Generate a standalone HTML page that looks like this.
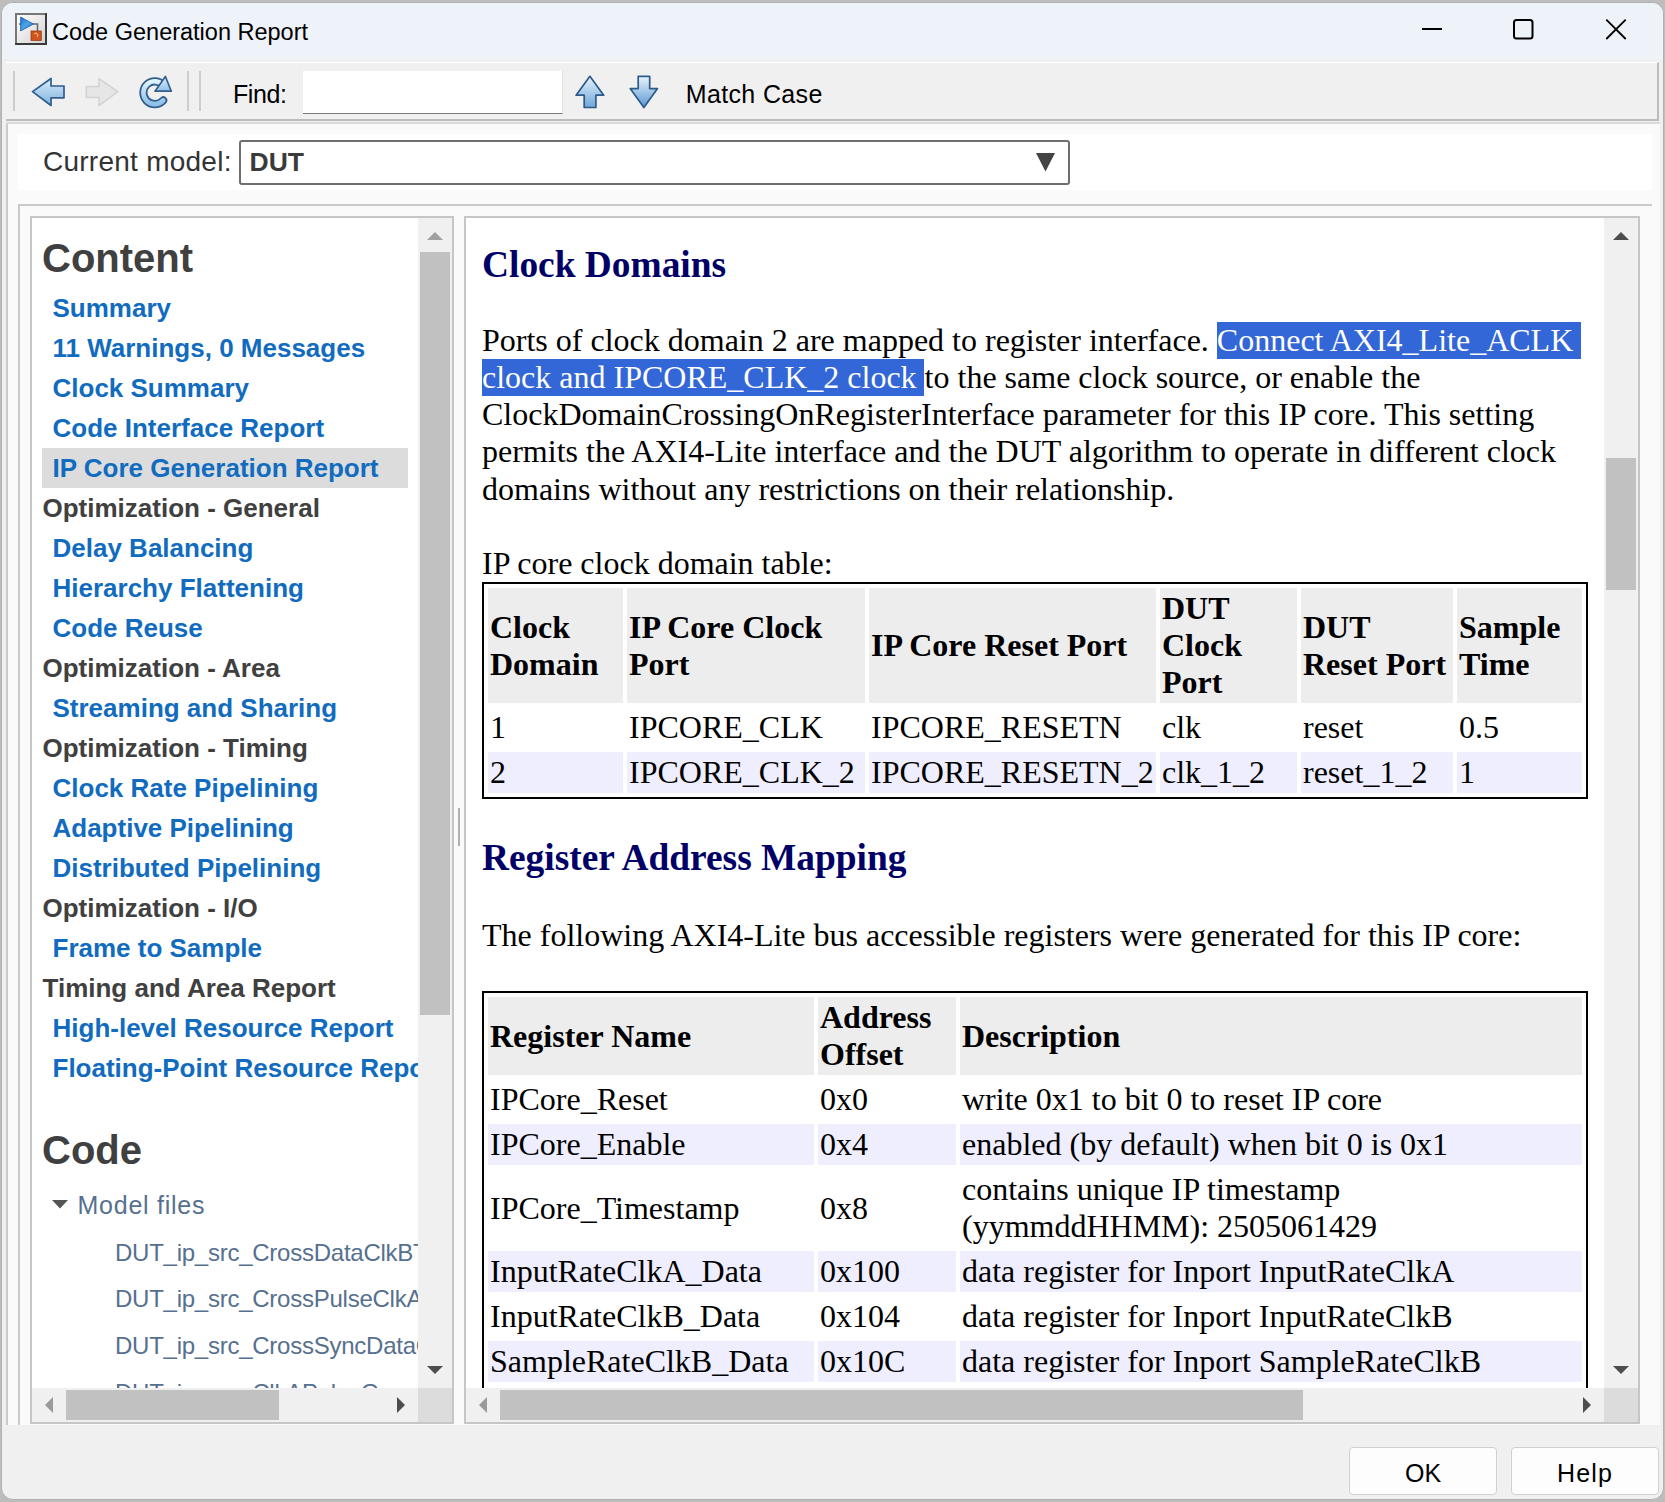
<!DOCTYPE html>
<html><head><meta charset="utf-8">
<style>
*{margin:0;padding:0;box-sizing:border-box}
html,body{width:1665px;height:1502px;overflow:hidden;background:#bdbdbd;font-family:"Liberation Sans",sans-serif;position:relative}
.a{position:absolute}
.t{position:absolute;white-space:nowrap}
.nav{position:absolute;white-space:nowrap;font-size:26px;font-weight:700;line-height:40px;height:40px}
.lk{color:#116cc0;padding-left:10px}
.hd{color:#404040}
.h2{position:absolute;font-family:"Liberation Serif",serif;font-weight:700;color:#000066;font-size:37.4px;white-space:nowrap;line-height:37.4px}
.p{position:absolute;font-family:"Liberation Serif",serif;font-size:32px;line-height:37px;white-space:nowrap;color:#000}
.sel{background:#3366d6;color:#fff}
.c{position:absolute;font-family:"Liberation Serif",serif;font-size:32px;line-height:37px;white-space:nowrap;color:#000;background:#fff}
.hc{background:#eeeeee;font-weight:700}
.alt{background:#eeeeff}
.cell{position:absolute;display:flex;align-items:center;padding:0 2px;font-family:"Liberation Serif",serif;font-size:32px;line-height:37px;white-space:nowrap;color:#000;background:#fff}
.cell.hc{background:#ededed;font-weight:700}
.cell.alt{background:#eeeeff}
</style></head><body>
<!-- window frame -->
<div class="a" style="left:1px;top:2px;width:1663px;height:1498px;background:#f0f0f0;border:1px solid #b0b0b0;border-radius:12px;overflow:hidden">
  <div class="a" style="left:0;top:0;width:1662px;height:56px;background:#eef2f9"></div>
</div>

<!-- title -->
<div class="t" style="left:52px;top:21px;font-size:23.5px;line-height:23.5px;color:#000">Code Generation Report</div>


<!-- toolbar -->
<div class="a" style="left:6px;top:62px;width:1653px;height:59px;background:#f0f0f0;border-top:1px solid #fff;border-bottom:2px solid #bcbcbc;border-right:2px solid #bcbcbc"></div>
<div class="a" style="left:6px;top:122px;width:1654px;height:2px;background:#dadada"></div>
<div class="a" style="left:13px;top:71px;width:2px;height:40px;background:#cdcdcd"></div>
<div class="a" style="left:187px;top:71px;width:2px;height:40px;background:#cdcdcd"></div>
<div class="a" style="left:199px;top:71px;width:2px;height:40px;background:#cdcdcd"></div>
<div class="t" style="left:233px;top:81.8px;font-size:25px;line-height:25px;letter-spacing:-0.4px;color:#000">Find:</div>
<div class="a" style="left:303px;top:71px;width:260px;height:43px;background:#fff;border-bottom:1px solid #7a7a7a;border-right:1px solid #e0e0e0"></div>
<div class="t" style="left:685.8px;top:81.5px;font-size:25px;line-height:25px;letter-spacing:0.35px;color:#000">Match Case</div>


<!-- icons -->
<svg class="a" style="left:14px;top:12px" width="34" height="34">
 <defs><linearGradient id="ibg" x1="0" y1="0" x2="1" y2="1"><stop offset="0" stop-color="#ffffff"/><stop offset="1" stop-color="#d2d2d2"/></linearGradient>
 <linearGradient id="tri" x1="0" y1="0" x2="1" y2="1"><stop offset="0" stop-color="#1f6fc8"/><stop offset="0.5" stop-color="#4aa6e8"/><stop offset="1" stop-color="#1a58a8"/></linearGradient></defs>
 <rect x="2" y="2" width="30" height="30" fill="url(#ibg)" stroke="#767676" stroke-width="2"/>
 <path d="M32,1.2 L32,32 L1.2,32" fill="none" stroke="#3a3a3a" stroke-width="2"/>
 <path d="M5,12 L8,12 M19,12 L23.5,12 L23.5,19" stroke="#6a6a6a" stroke-width="1.6" fill="none"/>
 <polygon points="6.6,5 19.5,12 6.6,19" fill="url(#tri)" stroke="#1e5ea8" stroke-width="0.8"/>
 <rect x="17" y="19" width="10.3" height="9.4" fill="#cf541f" stroke="#9a3a18" stroke-width="0.8"/>
 <path d="M20,22 l2,-1 l2,2 l-1,2" stroke="#f0b060" stroke-width="1.2" fill="none"/>
</svg>
<svg class="a" style="left:30px;top:76px" width="38" height="32">
 <defs><linearGradient id="ab" x1="0" y1="0" x2="0" y2="1"><stop offset="0" stop-color="#d8ecfa"/><stop offset="1" stop-color="#7fb2de"/></linearGradient></defs>
 <path d="M2.5,15.6 L21,2.5 L21,10 L34,10 L34,21.8 L21,21.8 L21,29.5 Z" fill="url(#ab)" stroke="#2f5d8c" stroke-width="1.7" stroke-linejoin="round"/>
</svg>
<svg class="a" style="left:84px;top:76px" width="38" height="32">
 <path d="M33.8,15.6 L15,2.6 L15,10.5 L2.3,10.5 L2.3,21.5 L15,21.5 L15,29.6 Z" fill="#e6e6e6" stroke="#d2d2d2" stroke-width="1.5" stroke-linejoin="round"/>
</svg>
<svg class="a" style="left:134px;top:72px" width="44" height="40">
 <defs><linearGradient id="rb" x1="0" y1="0" x2="0" y2="1"><stop offset="0" stop-color="#e0f2fc"/><stop offset="1" stop-color="#8fc0e6"/></linearGradient></defs>
 <path d="M29.2,28.4 A11.4,11.4 0 1 1 29.6,13.5" fill="none" stroke="#335f8e" stroke-width="8.2" stroke-linecap="round"/>
 <path d="M29.2,28.4 A11.4,11.4 0 1 1 29.6,13.5" fill="none" stroke="url(#rb)" stroke-width="4.6" stroke-linecap="round"/>
 <polygon points="31.4,4.5 37.3,19.2 21,19.2" fill="url(#rb)" stroke="#335f8e" stroke-width="1.7" stroke-linejoin="round"/>
</svg>
<svg class="a" style="left:574px;top:74px" width="32" height="36">
 <defs><linearGradient id="ub" x1="0" y1="0" x2="0" y2="1"><stop offset="0" stop-color="#e8f4fc"/><stop offset="1" stop-color="#6ea6d8"/></linearGradient></defs>
 <path d="M15.9,2.3 L29.7,21.2 L21.9,21.2 L21.9,33.5 L10.2,33.5 L10.2,21.2 L2.1,21.2 Z" fill="url(#ub)" stroke="#2c5a8a" stroke-width="1.7" stroke-linejoin="round"/>
</svg>
<svg class="a" style="left:628px;top:74px" width="32" height="36">
 <defs><linearGradient id="db" x1="0" y1="0" x2="0" y2="1"><stop offset="0" stop-color="#e8f4fc"/><stop offset="1" stop-color="#5b97d2"/></linearGradient></defs>
 <path d="M10.2,2.3 L21.7,2.3 L21.7,14.6 L29.5,14.6 L15.9,33.5 L2.2,14.6 L10.2,14.6 Z" fill="url(#db)" stroke="#2c5a8a" stroke-width="1.7" stroke-linejoin="round"/>
</svg>
<!-- window controls -->
<svg class="a" style="left:1410px;top:8px" width="240" height="42">
 <path d="M12,21 L32,21" stroke="#000" stroke-width="2"/>
 <rect x="104" y="12" width="18.5" height="18.5" rx="2.5" fill="none" stroke="#000" stroke-width="2"/>
 <path d="M196.3,11.6 L215.7,31 M215.7,11.6 L196.3,31" stroke="#000" stroke-width="1.8"/>
</svg>

<!-- current model band -->
<div class="a" style="left:6px;top:124px;width:2px;height:1301px;background:#cacaca"></div>
<div class="a" style="left:8px;top:124px;width:1652px;height:1301px;background:#fafafa"></div>
<div class="a" style="left:18px;top:134px;width:1634px;height:56px;background:#fff"></div>
<div class="t" style="left:43px;top:148px;font-size:28px;line-height:28px;letter-spacing:0.25px;color:#333">Current model:</div>
<div class="a" style="left:239px;top:140px;width:831px;height:45px;background:#fff;border:2px solid #6e6e6e;border-radius:3px"></div>
<div class="t" style="left:249.5px;top:149px;font-size:26.5px;line-height:26.5px;font-weight:700;color:#3a3a3a">DUT</div>
<svg class="a" style="left:1036px;top:153px" width="20" height="19"><polygon points="0,0 19,0 9.5,18.5" fill="#444"/></svg>
<div class="a" style="left:18px;top:204px;width:1634px;height:2px;background:#cacaca"></div>
<div class="a" style="left:18px;top:204px;width:2px;height:1221px;background:#cacaca"></div>

<!-- left panel -->
<div id="lp" class="a" style="left:30px;top:216px;width:424px;height:1208px;background:#fff;border:2px solid #c6c6c6;overflow:hidden"></div>
<!-- content panel -->
<div id="cp" class="a" style="left:464px;top:216px;width:1176px;height:1208px;background:#fff;border:2px solid #c6c6c6;overflow:hidden"></div>

<!-- bottom buttons -->
<div class="a" style="left:1349px;top:1447px;width:148px;height:48px;background:#fdfdfd;border:1px solid #d0d0d0;border-radius:4px"></div>
<div class="t" style="left:1405px;top:1461px;font-size:25px;line-height:25px;color:#000">OK</div>
<div class="a" style="left:1511px;top:1447px;width:148px;height:48px;background:#fdfdfd;border:1px solid #d0d0d0;border-radius:4px"></div>
<div class="t" style="left:1557px;top:1461px;font-size:25px;line-height:25px;letter-spacing:1.2px;color:#000">Help</div>


<!-- left nav -->
<div class="a" style="left:32px;top:218px;width:386px;height:1170px;overflow:hidden">
<div class="t" style="left:10px;top:20.1px;font-size:40px;line-height:40px;font-weight:700;color:#404040">Content</div>
<div class="a" style="left:10px;top:230px;width:366px;height:40px;background:#dcdcdc"></div>
<div class="nav lk" style="left:10.5px;top:69.5px">Summary</div>
<div class="nav lk" style="left:10.5px;top:109.5px">11 Warnings, 0 Messages</div>
<div class="nav lk" style="left:10.5px;top:149.5px">Clock Summary</div>
<div class="nav lk" style="left:10.5px;top:189.5px">Code Interface Report</div>
<div class="nav lk" style="left:10.5px;top:229.5px">IP Core Generation Report</div>
<div class="nav hd" style="left:10.5px;top:269.5px">Optimization - General</div>
<div class="nav lk" style="left:10.5px;top:309.5px">Delay Balancing</div>
<div class="nav lk" style="left:10.5px;top:349.5px">Hierarchy Flattening</div>
<div class="nav lk" style="left:10.5px;top:389.5px">Code Reuse</div>
<div class="nav hd" style="left:10.5px;top:429.5px">Optimization - Area</div>
<div class="nav lk" style="left:10.5px;top:469.5px">Streaming and Sharing</div>
<div class="nav hd" style="left:10.5px;top:509.5px">Optimization - Timing</div>
<div class="nav lk" style="left:10.5px;top:549.5px">Clock Rate Pipelining</div>
<div class="nav lk" style="left:10.5px;top:589.5px">Adaptive Pipelining</div>
<div class="nav lk" style="left:10.5px;top:629.5px">Distributed Pipelining</div>
<div class="nav hd" style="left:10.5px;top:669.5px">Optimization - I/O</div>
<div class="nav lk" style="left:10.5px;top:709.5px">Frame to Sample</div>
<div class="nav hd" style="left:10.5px;top:749.5px">Timing and Area Report</div>
<div class="nav lk" style="left:10.5px;top:789.5px">High-level Resource Report</div>
<div class="nav lk" style="left:10.5px;top:829.5px">Floating-Point Resource Report</div>
<div class="t" style="left:10px;top:911.9px;font-size:40px;line-height:40px;font-weight:700;color:#404040">Code</div>
<svg class="a" style="left:20px;top:982px" width="17" height="9"><polygon points="0,0 16,0 8,8.5" fill="#555"/></svg>
<div class="t" style="left:45.5px;top:975.3px;font-size:25px;line-height:25px;letter-spacing:0.75px;color:#56708f">Model files</div>
<div class="t" style="left:83px;top:1022.6px;font-size:24px;line-height:24px;letter-spacing:-0.25px;color:#56708f">DUT_ip_src_CrossDataClkBToClkA</div>
<div class="t" style="left:83px;top:1069.4px;font-size:24px;line-height:24px;letter-spacing:-0.25px;color:#56708f">DUT_ip_src_CrossPulseClkAToClkB</div>
<div class="t" style="left:83px;top:1116.2px;font-size:24px;line-height:24px;letter-spacing:-0.25px;color:#56708f">DUT_ip_src_CrossSyncDataClkAToClkB</div>
<div class="t" style="left:83px;top:1163.0px;font-size:24px;line-height:24px;letter-spacing:-0.25px;color:#56708f">DUT_ip_src_ClkAPulseGen</div>
</div>



<!-- report content -->
<div class="a" style="left:466px;top:218px;width:1138px;height:1170px;overflow:hidden;background:#fff">
<div class="h2" style="left:16px;top:27.5px">Clock Domains</div>
<div class="a" style="left:751px;top:104px;width:364px;height:37px;background:#3366d6"></div>
<div class="a" style="left:16px;top:141px;width:442px;height:37px;background:#3366d6"></div>
<div class="p" style="left:16.0px;top:103.7px;">Ports of clock domain 2 are mapped to register interface. <span style="color:#fff">Connect AXI4_Lite_ACLK</span></div>
<div class="p" style="left:16.0px;top:140.9px;"><span style="color:#fff">clock and IPCORE_CLK_2 clock </span>to the same clock source, or enable the</div>
<div class="p" style="left:16.0px;top:178.1px;">ClockDomainCrossingOnRegisterInterface parameter for this IP core. This setting</div>
<div class="p" style="left:16.0px;top:215.3px;">permits the AXI4-Lite interface and the DUT algorithm to operate in different clock</div>
<div class="p" style="left:16.0px;top:252.5px;">domains without any restrictions on their relationship.</div>
<div class="p" style="left:16.0px;top:326.6px;">IP core clock domain table:</div>
<div class="h2" style="left:16px;top:620.5px">Register Address Mapping</div>
<div class="p" style="left:16.0px;top:698.6px;">The following AXI4-Lite bus accessible registers were generated for this IP core:</div>
<div class="a" style="left:16px;top:364px;width:1106px;height:217px;border:2px solid #000"></div>
<div class="cell hc" style="left:22px;top:370px;width:135px;height:115px"><div>Clock<br>Domain</div></div>
<div class="cell hc" style="left:161px;top:370px;width:238px;height:115px"><div>IP Core Clock<br>Port</div></div>
<div class="cell hc" style="left:403px;top:370px;width:287px;height:115px"><div>IP Core Reset Port</div></div>
<div class="cell hc" style="left:694px;top:370px;width:137px;height:115px"><div>DUT<br>Clock<br>Port</div></div>
<div class="cell hc" style="left:835px;top:370px;width:152px;height:115px"><div>DUT<br>Reset Port</div></div>
<div class="cell hc" style="left:991px;top:370px;width:125px;height:115px"><div>Sample<br>Time</div></div>
<div class="cell " style="left:22px;top:489px;width:135px;height:41px"><div>1</div></div>
<div class="cell " style="left:161px;top:489px;width:238px;height:41px"><div>IPCORE_CLK</div></div>
<div class="cell " style="left:403px;top:489px;width:287px;height:41px"><div>IPCORE_RESETN</div></div>
<div class="cell " style="left:694px;top:489px;width:137px;height:41px"><div>clk</div></div>
<div class="cell " style="left:835px;top:489px;width:152px;height:41px"><div>reset</div></div>
<div class="cell " style="left:991px;top:489px;width:125px;height:41px"><div>0.5</div></div>
<div class="cell alt" style="left:22px;top:534px;width:135px;height:41px"><div>2</div></div>
<div class="cell alt" style="left:161px;top:534px;width:238px;height:41px"><div>IPCORE_CLK_2</div></div>
<div class="cell alt" style="left:403px;top:534px;width:287px;height:41px"><div>IPCORE_RESETN_2</div></div>
<div class="cell alt" style="left:694px;top:534px;width:137px;height:41px"><div>clk_1_2</div></div>
<div class="cell alt" style="left:835px;top:534px;width:152px;height:41px"><div>reset_1_2</div></div>
<div class="cell alt" style="left:991px;top:534px;width:125px;height:41px"><div>1</div></div>
<div class="a" style="left:16px;top:773px;width:1106px;height:600px;border:2px solid #000"></div>
<div class="cell hc" style="left:22px;top:779px;width:326px;height:78px"><div>Register Name</div></div>
<div class="cell hc" style="left:352px;top:779px;width:138px;height:78px"><div>Address<br>Offset</div></div>
<div class="cell hc" style="left:494px;top:779px;width:622px;height:78px"><div>Description</div></div>
<div class="cell " style="left:22px;top:861px;width:326px;height:41px"><div>IPCore_Reset</div></div>
<div class="cell " style="left:352px;top:861px;width:138px;height:41px"><div>0x0</div></div>
<div class="cell " style="left:494px;top:861px;width:622px;height:41px"><div>write 0x1 to bit 0 to reset IP core</div></div>
<div class="cell alt" style="left:22px;top:906px;width:326px;height:41px"><div>IPCore_Enable</div></div>
<div class="cell alt" style="left:352px;top:906px;width:138px;height:41px"><div>0x4</div></div>
<div class="cell alt" style="left:494px;top:906px;width:622px;height:41px"><div>enabled (by default) when bit 0 is 0x1</div></div>
<div class="cell " style="left:22px;top:951px;width:326px;height:78px"><div>IPCore_Timestamp</div></div>
<div class="cell " style="left:352px;top:951px;width:138px;height:78px"><div>0x8</div></div>
<div class="cell " style="left:494px;top:951px;width:622px;height:78px"><div>contains unique IP timestamp<br>(yymmddHHMM): 2505061429</div></div>
<div class="cell alt" style="left:22px;top:1033px;width:326px;height:41px"><div>InputRateClkA_Data</div></div>
<div class="cell alt" style="left:352px;top:1033px;width:138px;height:41px"><div>0x100</div></div>
<div class="cell alt" style="left:494px;top:1033px;width:622px;height:41px"><div>data register for Inport InputRateClkA</div></div>
<div class="cell " style="left:22px;top:1078px;width:326px;height:41px"><div>InputRateClkB_Data</div></div>
<div class="cell " style="left:352px;top:1078px;width:138px;height:41px"><div>0x104</div></div>
<div class="cell " style="left:494px;top:1078px;width:622px;height:41px"><div>data register for Inport InputRateClkB</div></div>
<div class="cell alt" style="left:22px;top:1123px;width:326px;height:41px"><div>SampleRateClkB_Data</div></div>
<div class="cell alt" style="left:352px;top:1123px;width:138px;height:41px"><div>0x10C</div></div>
<div class="cell alt" style="left:494px;top:1123px;width:622px;height:41px"><div>data register for Inport SampleRateClkB</div></div>
<div class="cell " style="left:22px;top:1168px;width:326px;height:41px"><div>SampleRateClkA_Data</div></div>
<div class="cell " style="left:352px;top:1168px;width:138px;height:41px"><div>0x108</div></div>
<div class="cell " style="left:494px;top:1168px;width:622px;height:41px"><div>data register for Inport SampleRateClkA</div></div>
<div class="cell alt" style="left:22px;top:1213px;width:326px;height:41px"><div>x</div></div>
<div class="cell alt" style="left:352px;top:1213px;width:138px;height:41px"><div>x</div></div>
<div class="cell alt" style="left:494px;top:1213px;width:622px;height:41px"><div>x</div></div>
</div>

<!-- left scrollbars -->
<div class="a" style="left:418px;top:218px;width:34px;height:1170px;background:#f0f0f0"></div>
<div class="a" style="left:420px;top:252px;width:30px;height:763px;background:#c1c1c1"></div>
<svg class="a" style="left:426px;top:231px" width="18" height="10"><polygon points="1,9 17,9 9,1" fill="#a0a0a0"/></svg>
<svg class="a" style="left:426px;top:1365px" width="18" height="10"><polygon points="1,1 17,1 9,9" fill="#4d4d4d"/></svg>
<div class="a" style="left:32px;top:1388px;width:386px;height:34px;background:#f0f0f0"></div>
<div class="a" style="left:66px;top:1390px;width:213px;height:30px;background:#c1c1c1"></div>
<svg class="a" style="left:44px;top:1396px" width="10" height="18"><polygon points="9,1 9,17 1,9" fill="#9a9a9a"/></svg>
<svg class="a" style="left:396px;top:1396px" width="10" height="18"><polygon points="1,1 1,17 9,9" fill="#4d4d4d"/></svg>
<div class="a" style="left:418px;top:1388px;width:34px;height:34px;background:#dcdcdc"></div>

<!-- content scrollbars -->
<div class="a" style="left:1604px;top:218px;width:34px;height:1170px;background:#f0f0f0"></div>
<div class="a" style="left:1606px;top:458px;width:30px;height:132px;background:#c1c1c1"></div>
<svg class="a" style="left:1612px;top:231px" width="18" height="10"><polygon points="1,9 17,9 9,1" fill="#4d4d4d"/></svg>
<svg class="a" style="left:1612px;top:1365px" width="18" height="10"><polygon points="1,1 17,1 9,9" fill="#4d4d4d"/></svg>
<div class="a" style="left:466px;top:1388px;width:1138px;height:34px;background:#f0f0f0"></div>
<div class="a" style="left:500px;top:1390px;width:803px;height:30px;background:#c1c1c1"></div>
<svg class="a" style="left:478px;top:1396px" width="10" height="18"><polygon points="9,1 9,17 1,9" fill="#9a9a9a"/></svg>
<svg class="a" style="left:1582px;top:1396px" width="10" height="18"><polygon points="1,1 1,17 9,9" fill="#4d4d4d"/></svg>
<div class="a" style="left:1604px;top:1388px;width:34px;height:34px;background:#dcdcdc"></div>
<!-- splitter grip -->
<div class="a" style="left:458px;top:808px;width:2px;height:38px;background:#b0b0b0"></div>

</body></html>
